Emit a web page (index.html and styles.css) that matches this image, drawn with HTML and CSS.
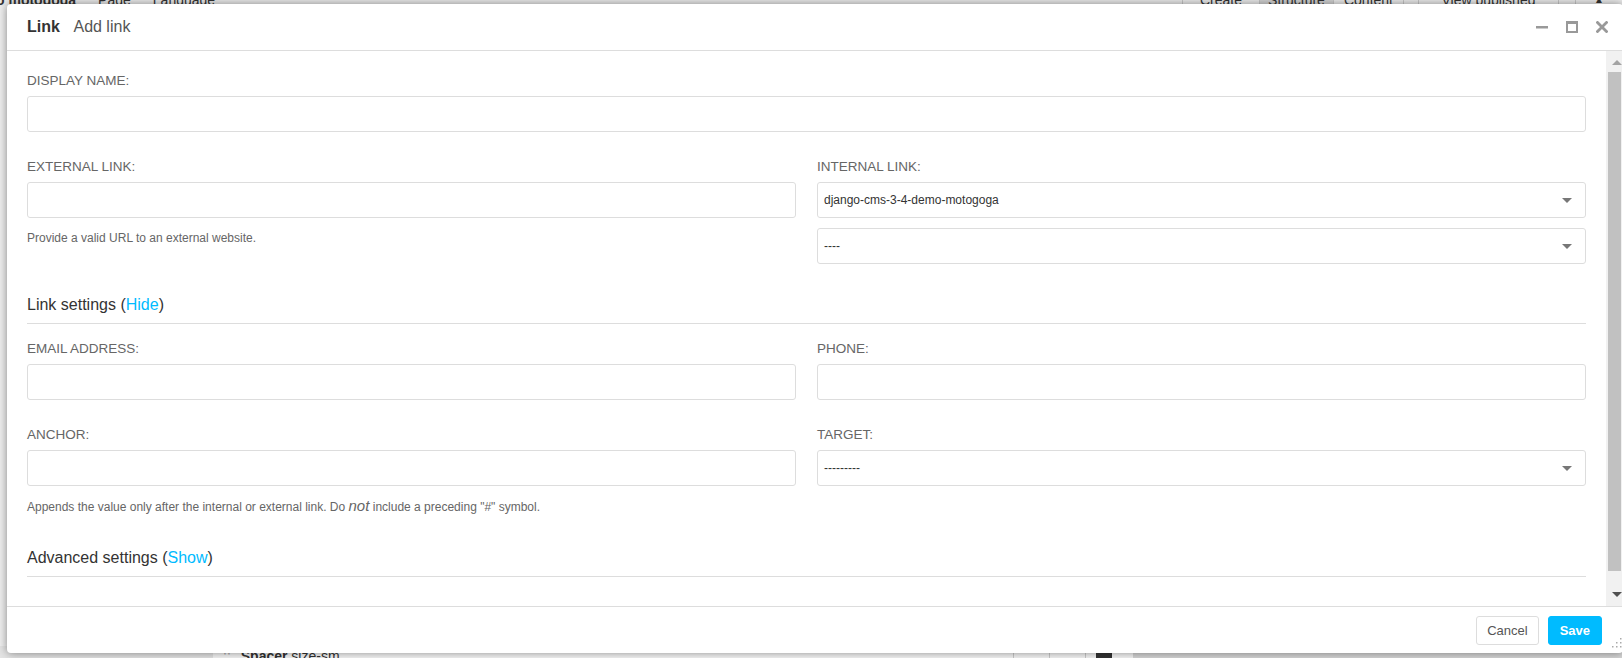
FILE: index.html
```html
<!DOCTYPE html>
<html>
<head>
    <title>Link - Add link</title>
    <link rel="stylesheet" href="styles.css">
</head>
<body>
    <div class="toolbar">
        <div class="toolbar-left">
            <span class="site">o motogoga</span>
            <span>Page</span>
            <span>Language</span>
        </div>
        <div class="toolbar-right">
            <span class="tb-btn w77">Create</span>
            <span class="tb-btn w74 active">Structure</span>
            <span class="tb-btn w70">Content</span>
            <span class="tb-btn w15"></span>
            <span class="tb-btn w140">View published</span>
            <span class="tb-btn w17"></span>
            <span class="tb-btn w47">&#9650;</span>
        </div>
    </div>

    <div class="page"></div>

    <div class="structure">
        <div class="structure-gutter"></div>
        <div class="structure-item">
            <span class="drag">::</span>
            <span><b>Spacer</b> size-sm</span>
        </div>
        <div class="structure-tools">
            <span class="tool"></span>
            <span class="tool"></span>
            <span class="tool dark"></span>
        </div>
        <div class="structure-rest"></div>
    </div>

    <div class="modal">
        <div class="modal-head">
            <div class="modal-title"><strong>Link</strong> Add link</div>
            <div class="controls">
                <svg width="12" height="12" viewBox="0 0 12 12"><rect x="0" y="5" width="12" height="2.5" fill="#999"/></svg>
                <svg width="12" height="12" viewBox="0 0 12 12"><rect x="1" y="1.5" width="10" height="9.5" fill="none" stroke="#999" stroke-width="2"/><rect x="0" y="0" width="12" height="3" fill="#999"/></svg>
                <svg width="12" height="12" viewBox="0 0 12 12"><path d="M1.5 1.5 L10.5 10.5 M10.5 1.5 L1.5 10.5" stroke="#999" stroke-width="2.8" stroke-linecap="square"/></svg>
            </div>
        </div>

        <div class="modal-body">
            <div class="modal-content">
                <div class="field field-full">
                    <label class="field-label">DISPLAY NAME:</label>
                    <div class="input"></div>
                </div>

                <div class="row">
                    <div class="field">
                        <label class="field-label">EXTERNAL LINK:</label>
                        <div class="input"></div>
                        <p class="help">Provide a valid URL to an external website.</p>
                    </div>
                    <div class="field">
                        <label class="field-label">INTERNAL LINK:</label>
                        <div class="input select"><span>django-cms-3-4-demo-motogoga</span><i class="caret"></i></div>
                        <div class="input select"><span>----</span><i class="caret"></i></div>
                    </div>
                </div>

                <h3 class="section">Link settings (<a href="#">Hide</a>)</h3>

                <div class="row row-first">
                    <div class="field">
                        <label class="field-label">EMAIL ADDRESS:</label>
                        <div class="input"></div>
                    </div>
                    <div class="field">
                        <label class="field-label">PHONE:</label>
                        <div class="input"></div>
                    </div>
                </div>

                <div class="row row-next">
                    <div class="field">
                        <label class="field-label">ANCHOR:</label>
                        <div class="input"></div>
                        <p class="help">Appends the value only after the internal or external link. Do <em>not</em> include a preceding "#" symbol.</p>
                    </div>
                    <div class="field">
                        <label class="field-label">TARGET:</label>
                        <div class="input select"><span>---------</span><i class="caret"></i></div>
                    </div>
                </div>

                <h3 class="section">Advanced settings (<a href="#">Show</a>)</h3>
            </div>

            <div class="scrollbar">
                <div class="sb-btn sb-up"><i class="sb-arrow up"></i></div>
                <div class="sb-thumb"></div>
                <div class="sb-track"></div>
                <div class="sb-btn sb-down"><i class="sb-arrow down"></i></div>
            </div>
        </div>

        <div class="modal-foot">
            <button class="btn btn-cancel">Cancel</button>
            <button class="btn btn-save">Save</button>
        </div>

        <svg class="resize" width="10" height="10" viewBox="0 0 10 10">
            <rect x="8" y="0" width="1.5" height="1.5" fill="#aaa"/>
            <rect x="4" y="4" width="1.5" height="1.5" fill="#aaa"/>
            <rect x="8" y="4" width="1.5" height="1.5" fill="#aaa"/>
            <rect x="0" y="8" width="1.5" height="1.5" fill="#aaa"/>
            <rect x="4" y="8" width="1.5" height="1.5" fill="#aaa"/>
            <rect x="8" y="8" width="1.5" height="1.5" fill="#aaa"/>
        </svg>
    </div>
</body>
</html>
```

FILE: styles.css
```css
* {
    box-sizing: border-box;
    margin: 0;
    padding: 0;
}

body {
    font-family: "Liberation Sans", Arial, sans-serif;
    background: #efefef;
    width: 1622px;
    height: 658px;
    overflow: hidden;
    position: relative;
    display: flex;
    flex-direction: column;
}

/* page behind the modal */
.toolbar {
    display: flex;
    justify-content: space-between;
    height: 12px;
    margin-top: -6px;
    background: #ececec;
    font-size: 14px;
    line-height: 12px;
    color: #333;
}

.toolbar-left {
    display: flex;
    gap: 22px;
}

.site {
    font-weight: bold;
    margin-left: -4px;
}

.toolbar-right {
    display: flex;
}

.tb-btn {
    border-left: 1px solid #c8c8c8;
    text-align: center;
    overflow: hidden;
    white-space: nowrap;
}

.tb-btn.active {
    background: #d4d4d4;
}

.w77 { width: 77px; }
.w74 { width: 74px; }
.w70 { width: 70px; }
.w15 { width: 15px; }
.w140 { width: 140px; }
.w17 { width: 17px; }
.w47 { width: 47px; font-size: 10px; }

.page {
    flex: 1;
}

.structure {
    display: flex;
    height: 24px;
    margin-bottom: -12px;
    font-size: 14px;
    color: #333;
}

.structure-gutter {
    width: 213px;
    background: #e4e4e4;
}

.structure-item {
    width: 800px;
    background: #f7f7f7;
    display: flex;
    gap: 10px;
    padding: 2px 0 0 10px;
}

.drag {
    color: #aaa;
}

.structure-tools {
    display: flex;
    width: 120px;
    background: #f7f7f7;
}

.tool {
    width: 36px;
    border-left: 1px solid #ccc;
}

.tool.dark {
    background: linear-gradient(#333, #333) no-repeat 10px 2px / 16px 10px;
}

.structure-rest {
    flex: 1;
    background: #d6d6d6;
}

/* modal */
.modal {
    position: absolute;
    left: 7px;
    top: 4px;
    width: 1616px;
    height: 649px;
    background: #fff;
    border-radius: 4px;
    box-shadow: 0 0 10px rgba(0, 0, 0, 0.45);
    display: flex;
    flex-direction: column;
    overflow: hidden;
}

.modal-head {
    height: 47px;
    flex-shrink: 0;
    border-bottom: 1px solid #ddd;
    display: flex;
    align-items: center;
    padding: 0 15px 0 20px;
}

.modal-title {
    font-size: 16px;
    color: #555;
}

.modal-title strong {
    color: #333;
    margin-right: 10px;
}

.controls {
    margin-left: auto;
    display: flex;
    gap: 18px;
}

.controls svg {
    display: block;
}

.modal-body {
    flex: 1;
    display: flex;
    min-height: 0;
}

.modal-content {
    flex: 1;
    padding: 20px 20px 0;
    overflow: hidden;
}

.field-label {
    display: block;
    font-size: 13.5px;
    line-height: 20px;
    color: #666;
    margin-bottom: 5px;
}

.field-full {
    margin-bottom: 25px;
}

.input {
    height: 36px;
    border: 1px solid #ddd;
    border-radius: 3px;
    background: #fff;
}

.select {
    display: flex;
    align-items: center;
    justify-content: space-between;
    padding: 0 13px 0 6px;
    font-size: 12px;
    color: #333;
}

.select + .select {
    margin-top: 10px;
}

.caret {
    width: 0;
    height: 0;
    border-left: 5px solid transparent;
    border-right: 5px solid transparent;
    border-top: 5px solid #777;
}

.row {
    display: grid;
    grid-template-columns: 1fr 1fr;
    gap: 21px;
}

.row-first {
    margin-top: 15px;
}

.row-next {
    margin-top: 25px;
}

.help {
    font-size: 12px;
    line-height: 20px;
    color: #666;
    margin-top: 10px;
}

.help em {
    font-size: 15px;
}

.section {
    font-size: 16px;
    font-weight: normal;
    line-height: 20px;
    color: #333;
    padding-bottom: 8px;
    border-bottom: 1px solid #ddd;
    margin-top: 31px;
}

.section a {
    color: #00bbff;
    text-decoration: none;
}

/* fake scrollbar of the iframe */
.scrollbar {
    width: 17px;
    background: #f1f1f1;
    display: flex;
    flex-direction: column;
}

.sb-btn {
    height: 17px;
    display: flex;
    justify-content: center;
    padding-left: 5px;
}

.sb-up {
    padding-top: 9px;
}

.sb-down {
    padding-top: 3px;
}

.sb-arrow {
    width: 0;
    height: 0;
    border-left: 5px solid transparent;
    border-right: 5px solid transparent;
}

.sb-arrow.up {
    border-bottom: 5px solid #a3a3a3;
}

.sb-arrow.down {
    border-top: 5px solid #505050;
}

.sb-thumb {
    height: 499px;
    margin: 4px 2px 0 2px;
    background: #c1c1c1;
}

.sb-track {
    flex: 1;
}

.modal-foot {
    height: 47px;
    flex-shrink: 0;
    border-top: 1px solid #ddd;
    display: flex;
    align-items: center;
    justify-content: flex-end;
    padding-right: 21px;
}

.btn {
    height: 29px;
    font-family: inherit;
    font-size: 13px;
    border-radius: 3px;
    cursor: pointer;
}

.btn-cancel {
    background: #fff;
    border: 1px solid #ddd;
    color: #555;
    padding: 0 10px;
}

.btn-save {
    background: #00bbff;
    border: 1px solid #00bbff;
    color: #fff;
    font-weight: bold;
    padding: 0 11px;
    margin-left: 9px;
}

.resize {
    position: absolute;
    right: 1px;
    bottom: 5px;
}
```
